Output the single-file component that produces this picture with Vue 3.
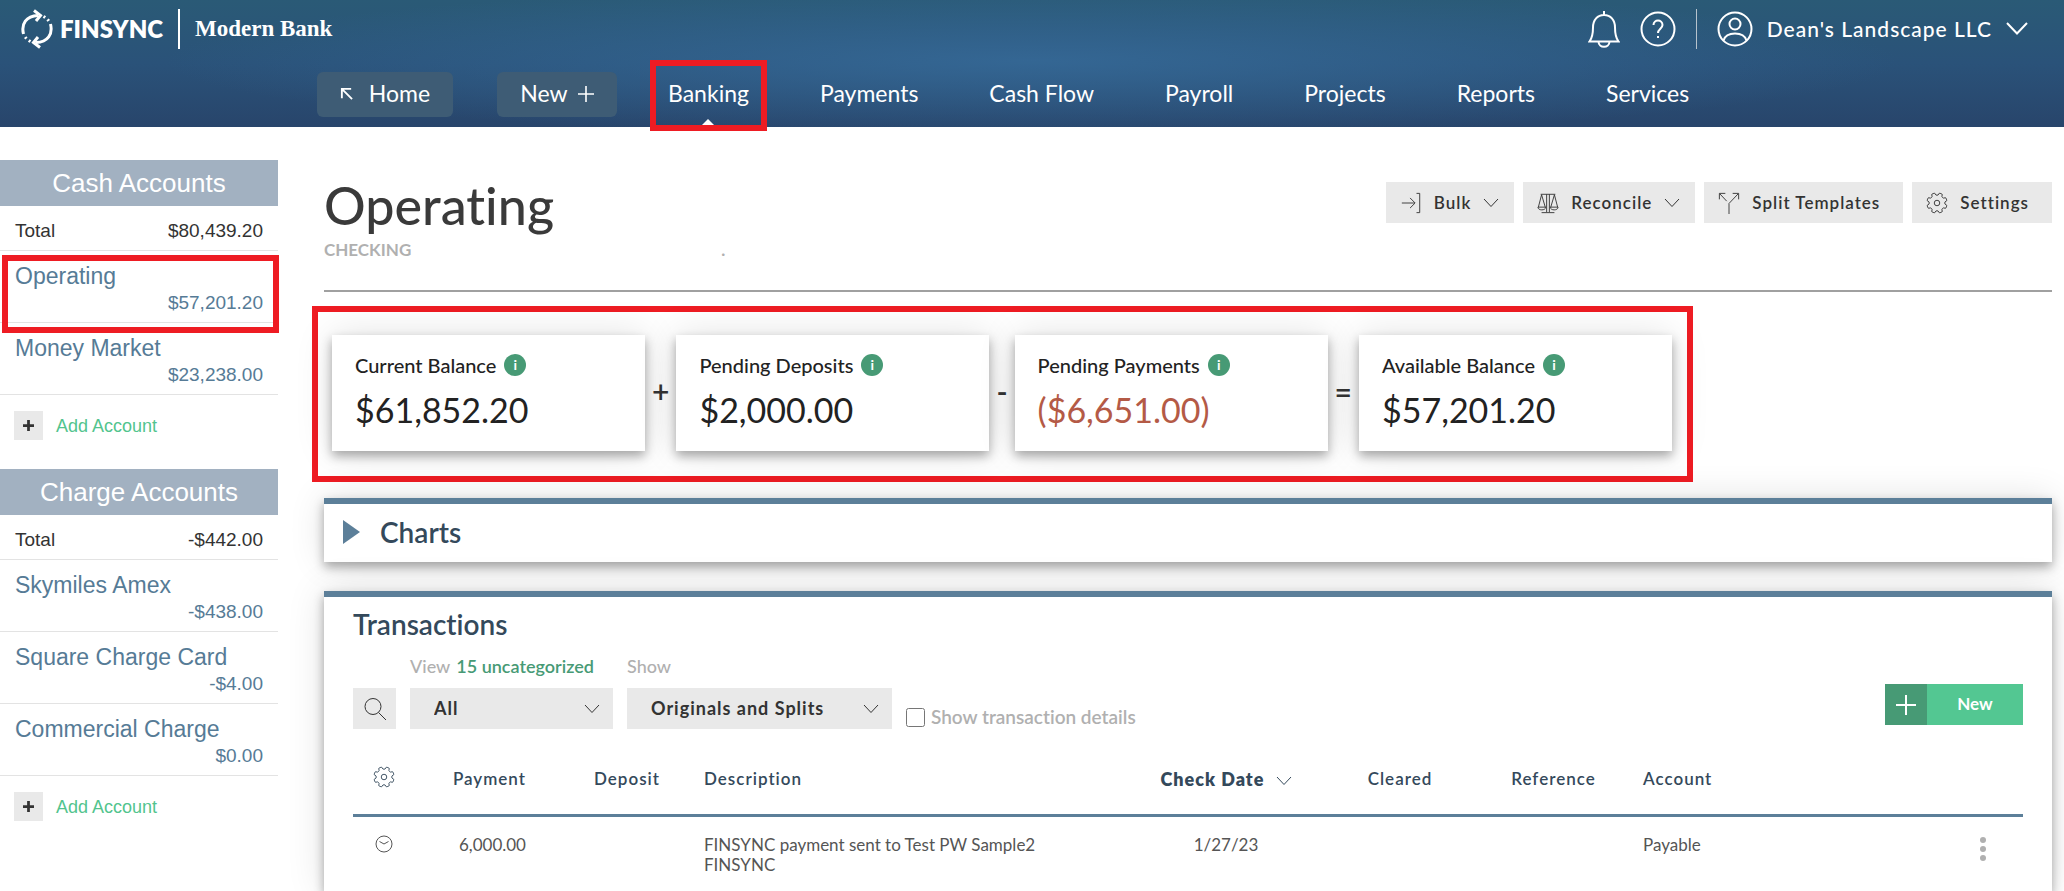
<script setup>
import { ref } from 'vue'

const navLinks = ['Payments', 'Cash Flow', 'Payroll', 'Projects', 'Reports', 'Services']

const groups = [
  {
    title: 'Cash Accounts',
    total: '$80,439.20',
    accounts: [
      { name: 'Operating', amount: '$57,201.20', marked: true },
      { name: 'Money Market', amount: '$23,238.00' },
    ],
  },
  {
    title: 'Charge Accounts',
    total: '-$442.00',
    accounts: [
      { name: 'Skymiles Amex', amount: '-$438.00' },
      { name: 'Square Charge Card', amount: '-$4.00' },
      { name: 'Commercial Charge', amount: '$0.00' },
    ],
  },
]

const actions = [
  { label: 'Bulk', icon: 'bulk', menu: true },
  { label: 'Reconcile', icon: 'scales', menu: true },
  { label: 'Split Templates', icon: 'split' },
  { label: 'Settings', icon: 'gear' },
]

// `op` is the sign drawn in front of the card
const balances = [
  { label: 'Current Balance', value: '$61,852.20' },
  { label: 'Pending Deposits', value: '$2,000.00', op: '+' },
  { label: 'Pending Payments', value: '($6,651.00)', op: '-', negative: true },
  { label: 'Available Balance', value: '$57,201.20', op: '=' },
]

const transactions = [
  {
    payment: '6,000.00',
    deposit: '',
    description: ['FINSYNC payment sent to Test PW Sample2', 'FINSYNC'],
    date: '1/27/23',
    account: 'Payable',
  },
]

const view = ref('All')
const show = ref('Originals and Splits')
const details = ref(false)

// Eight-tooth outline around (12, 12)
function gearPath() {
  const pt = (r, deg) => {
    const a = (deg * Math.PI) / 180
    return `${(12 + r * Math.cos(a)).toFixed(2)} ${(12 + r * Math.sin(a)).toFixed(2)}`
  }
  let d = ''
  for (let i = 0; i < 8; i++) {
    const c = i * 45 + 22.5
    d += `${i ? 'L' : 'M'}${pt(8.8, c - 15)}L${pt(11, c - 9)}Q${pt(11.4, c)} ${pt(11, c + 9)}L${pt(8.8, c + 15)}`
    d += `Q${pt(8.2, c + 22.5)} ${pt(8.8, c + 30)}`
  }
  return d + 'Z'
}
const gear = gearPath()
</script>

<template>
  <div class="page">
    <svg class="sprite" aria-hidden="true">
      <symbol id="chevron" viewBox="0 0 16 10"><path d="M1 1l7 7.500L15 1" /></symbol>
      <symbol id="plus" viewBox="0 0 20 20"><path d="M10 0v20M0 10h20" /></symbol>
      <symbol id="gear" viewBox="0 0 24 24">
        <path :d="gear" />
        <circle cx="12" cy="12" r="3" />
      </symbol>
      <symbol id="bulk" viewBox="0 0 24 24">
        <path d="M2 12h14M11 6.500L16.500 12l-5.500 5.500M18 1.500h3.500v21H18" />
      </symbol>
      <symbol id="scales" viewBox="0 0 24 24">
        <path d="M4 2.500h16M10.500 2.500V22M13.500 2.500V22M5 22.500h14" />
        <path d="M5 3L1.500 16.500M5 3l4 13.500M19 3l-4 13.500M19 3l3.500 13.500" />
        <path d="M1 16.500h8.500c0 4-8.500 4-8.500 0zM14.500 16.500H23c0 4-8.500 4-8.500 0z" />
      </symbol>
      <symbol id="split" viewBox="0 0 24 24">
        <path d="M1.500 8V1.500H8M2 2l7.500 8M22.500 8V1.500H16M22 2L12 12.500V24" />
      </symbol>
    </svg>

    <header class="header">
      <div class="brand-row">
        <a href="#" class="brand">
          <svg class="mark" viewBox="0 0 32 40">
            <path d="M2.500 25C0 15 5 7 17 6.500" />
            <path d="M13 1.500l6.500 5L15 12" />
            <path d="M29.500 15c2.500 10-2.500 18-14.500 18.500" />
            <path d="M19 38.500l-6.500-5L17 28" />
            <path class="dots" d="M22.500 7.500c2.500 1.500 4.500 3 6 5.500M9.500 32.500c-2.500-1.500-4.500-3-6-5.500" />
          </svg>
          <span class="brand-name">FINSYNC</span>
          <span class="brand-sub">Modern Bank</span>
        </a>
        <div class="user-area">
          <button type="button" class="bare" aria-label="Notifications">
            <svg class="bell" viewBox="0 0 32 38">
              <path d="M16 1v4M1.500 31.500h29c-3-4-3.500-8-3.500-14C27 10 22.500 5 16 5S5 10 5 17.500c0 6-.5 10-3.500 14z" />
              <path d="M10.500 31.500c0 7 11 7 11 0" />
            </svg>
          </button>
          <button type="button" class="bare" aria-label="Help">
            <svg class="round" viewBox="0 0 36 36">
              <circle cx="18" cy="18" r="16.500" />
              <path d="M13.500 14c0-6 9-6 9 0 0 3.500-4.500 4-4.500 8M18 25v2" />
            </svg>
          </button>
          <button type="button" class="bare company">
            <svg class="round" viewBox="0 0 36 36">
              <circle cx="18" cy="18" r="16.500" />
              <circle cx="18" cy="13" r="5.500" />
              <path d="M6.500 29.500C8 24.500 12.500 22.500 18 22.500s10 2 11.500 7" />
            </svg>
            <span>Dean's Landscape LLC</span>
            <svg class="company-chevron" viewBox="0 0 22 13"><path d="M1 1l10 10.500L21 1" /></svg>
          </button>
        </div>
      </div>

      <nav class="nav">
        <a href="#" class="pill home">
          <svg viewBox="0 0 14 14"><path d="M2 12V2h10M2.500 2.500L13 13" /></svg>
          Home
        </a>
        <button type="button" class="pill create">
          New
          <svg><use href="#plus" /></svg>
        </button>
        <a href="#" class="active">Banking<i class="callout"></i></a>
        <a v-for="link in navLinks" :key="link" href="#">{{ link }}</a>
      </nav>
    </header>

    <div class="body">
      <aside class="sidebar">
        <section v-for="group in groups" :key="group.title" class="group">
          <h2>{{ group.title }}</h2>
          <div class="total">
            <span>Total</span>
            <span>{{ group.total }}</span>
          </div>
          <a v-for="account in group.accounts" :key="account.name" href="#" class="account">
            <span>{{ account.name }}</span>
            <span class="amount">{{ account.amount }}</span>
            <i v-if="account.marked" class="callout"></i>
          </a>
          <button type="button" class="add">
            <span class="add-box"><svg><use href="#plus" /></svg></span>
            Add Account
          </button>
        </section>
      </aside>

      <main class="main">
        <div class="title-row">
          <div>
            <h1>Operating</h1>
            <div class="kind">
              <span>CHECKING</span>
              <span>.</span>
            </div>
          </div>
          <div class="actions">
            <button v-for="action in actions" :key="action.label" type="button" :class="{ menu: action.menu }">
              <svg class="action-icon"><use :href="`#${action.icon}`" /></svg>
              {{ action.label }}
              <svg v-if="action.menu" class="chevron"><use href="#chevron" /></svg>
            </button>
          </div>
        </div>

        <section class="balances">
          <template v-for="item in balances" :key="item.label">
            <span v-if="item.op" class="op">{{ item.op }}</span>
            <div class="card">
              <div class="card-label">
                {{ item.label }}
                <span class="info">i</span>
              </div>
              <div class="card-value" :class="{ negative: item.negative }">{{ item.value }}</div>
            </div>
          </template>
        </section>

        <section class="panel charts">
          <button type="button">
            <svg viewBox="0 0 17 24"><path d="M0 0l17 12L0 24z" /></svg>
            Charts
          </button>
        </section>

        <section class="panel transactions">
          <h2>Transactions</h2>
          <div class="filters">
            <button type="button" class="search" aria-label="Search">
              <svg viewBox="0 0 24 24">
                <circle cx="10" cy="9.500" r="8" />
                <path d="M15.500 15.500L23 23" />
              </svg>
            </button>
            <div class="field view">
              <div class="caption">
                <label for="view">View</label>
                <a href="#">15 uncategorized</a>
              </div>
              <div class="select">
                <select id="view" v-model="view"><option>All</option></select>
                <svg class="chevron"><use href="#chevron" /></svg>
              </div>
            </div>
            <div class="field show">
              <div class="caption"><label for="show">Show</label></div>
              <div class="select">
                <select id="show" v-model="show"><option>Originals and Splits</option></select>
                <svg class="chevron"><use href="#chevron" /></svg>
              </div>
            </div>
            <label class="check">
              <input v-model="details" type="checkbox" />
              Show transaction details
            </label>
            <button type="button" class="new">
              <span class="new-plus"><svg><use href="#plus" /></svg></span>
              <span class="new-text">New</span>
            </button>
          </div>

          <table>
            <thead>
              <tr>
                <th class="c-icon">
                  <button type="button" class="bare" aria-label="Columns">
                    <svg class="gear"><use href="#gear" /></svg>
                  </button>
                </th>
                <th class="c-payment">Payment</th>
                <th class="c-deposit">Deposit</th>
                <th class="c-description">Description</th>
                <th class="c-date">
                  Check Date
                  <svg class="chevron"><use href="#chevron" /></svg>
                </th>
                <th class="c-cleared">Cleared</th>
                <th class="c-reference">Reference</th>
                <th>Account</th>
                <th class="c-more"></th>
              </tr>
            </thead>
            <tbody>
              <tr v-for="(row, i) in transactions" :key="i">
                <td class="c-icon">
                  <svg class="clock" viewBox="0 0 18 18">
                    <circle cx="9" cy="9" r="8" />
                    <path d="M4.500 6.500L9 9l4.500-2.500" />
                  </svg>
                </td>
                <td class="c-payment">{{ row.payment }}</td>
                <td class="c-deposit">{{ row.deposit }}</td>
                <td class="c-description">
                  <div v-for="line in row.description" :key="line">{{ line }}</div>
                </td>
                <td class="c-date">{{ row.date }}</td>
                <td class="c-cleared"></td>
                <td class="c-reference"></td>
                <td>{{ row.account }}</td>
                <td class="c-more">
                  <button type="button" class="bare" aria-label="More">
                    <svg class="more" viewBox="0 0 8 28">
                      <circle cx="4" cy="5" r="3" />
                      <circle cx="4" cy="14" r="3" />
                      <circle cx="4" cy="23" r="3" />
                    </svg>
                  </button>
                </td>
              </tr>
            </tbody>
          </table>
        </section>
      </main>
    </div>
  </div>
</template>

<style>
body {
  background: #fff;
}
</style>

<style scoped>
.page {
  display: flex;
  flex-direction: column;
  min-height: 100vh;
  font-family: Lato, "Open Sans", sans-serif;
  font-variant-ligatures: none;
  color: #333;
}
.page *,
.page {
  box-sizing: border-box;
}
.sprite {
  position: absolute;
  width: 0;
  height: 0;
}
svg {
  fill: none;
  stroke: currentColor;
  flex: none;
}
button {
  font: inherit;
  font-variant-ligatures: none;
  color: inherit;
  border: 0;
  padding: 0;
  background: none;
  cursor: pointer;
}
a {
  color: inherit;
  text-decoration: none;
}
h1,
h2 {
  margin: 0;
}
.bare {
  display: inline-flex;
  align-items: center;
}
.chevron {
  width: 16px;
  height: 10px;
}

/* red frames around the parts being pointed out */
.callout {
  position: absolute;
  border: 6px solid #ee1c23;
  z-index: 2;
  pointer-events: none;
}

/* header */
.header {
  height: 127px;
  color: #fff;
  background:
    radial-gradient(ellipse 42% 60% at 50% 48%, rgba(54, 106, 152, 0.85), rgba(54, 106, 152, 0)),
    linear-gradient(#2a5a76, #2a5279 50%, #28456b);
}
.brand-row {
  display: flex;
  justify-content: space-between;
  align-items: center;
  height: 58px;
  padding: 0 36px 0 21px;
}
.brand {
  display: flex;
  align-items: center;
}
.mark {
  width: 32px;
  height: 40px;
  stroke-width: 3;
}
.dots {
  stroke-dasharray: 2 3;
}
.brand-name {
  margin-left: 7px;
  padding-right: 15px;
  border-right: 2px solid #fff;
  font-size: 24px;
  line-height: 40px;
  font-weight: 800;
}
.brand-sub {
  margin-left: 15px;
  font: bold 23px/40px "Liberation Serif", serif;
}
.user-area {
  display: flex;
  align-items: center;
  gap: 20px;
}
.bell {
  width: 32px;
  height: 38px;
  stroke-width: 2;
}
.round {
  width: 36px;
  height: 36px;
  stroke-width: 2;
}
.company {
  height: 40px;
  padding: 0 0 1px 20px;
  border-left: 1px solid #b7c3cd;
  font-size: 21px;
  font-weight: 500;
  letter-spacing: 1px;
  gap: 14px;
}
.company-chevron {
  width: 22px;
  height: 13px;
  stroke-width: 2;
}
.nav {
  display: flex;
  gap: 71px;
  padding: 14px 0 0 317px;
  font-size: 23px;
  line-height: 43px;
}
.nav > a,
.nav > button {
  display: flex;
  align-items: center;
  justify-content: center;
  height: 45px;
  padding-bottom: 2px;
  white-space: nowrap;
}
.nav .pill {
  background: #3e5c75;
  border-radius: 6px;
}
.home {
  width: 136px;
  gap: 16px;
}
.home svg {
  width: 13px;
  height: 13px;
  stroke-width: 2;
}
.create {
  width: 120px;
  gap: 10px;
  margin: 0 -20px 0 -27px;
}
.create svg {
  width: 16px;
  height: 16px;
  stroke-width: 2;
}
.active {
  position: relative;
}
.active::after {
  content: "";
  position: absolute;
  bottom: -9px;
  left: 50%;
  margin-left: -7px;
  border: 7px solid transparent;
  border-top: 0;
  border-bottom-color: #fff;
}
.active .callout {
  inset: -12px -18px -14px;
}

/* sidebar */
.body {
  display: flex;
  flex: 1;
}
.sidebar {
  flex: none;
  width: 278px;
  padding-top: 33px;
  font: 19px/26px "Liberation Sans", sans-serif;
}
.group {
  margin-bottom: 29px;
}
.group h2 {
  background: #a2b1c1;
  color: #fff;
  text-align: center;
  font-size: 26px;
  line-height: 46px;
  font-weight: 400;
}
.total {
  display: flex;
  justify-content: space-between;
  padding: 12px 15px 6px;
  border-bottom: 1px solid #e3e3e3;
}
.account {
  position: relative;
  display: flex;
  flex-direction: column;
  padding: 12px 15px 6px;
  border-bottom: 1px solid #e3e3e3;
  color: #567b96;
  font-size: 23px;
}
.amount {
  padding-top: 1px;
  font-size: 19px;
  text-align: right;
}
.account .callout {
  inset: 4px -1px -11px 2px;
}
.add {
  display: flex;
  align-items: center;
  gap: 13px;
  margin: 16px 0 0 14px;
  color: #52c48e;
  font-size: 18px;
}
.add-box {
  display: flex;
  align-items: center;
  justify-content: center;
  width: 29px;
  height: 29px;
  background: #e9e9e9;
  color: #333;
}
.add-box svg {
  width: 11px;
  height: 11px;
  stroke-width: 5;
}

/* main column */
.main {
  display: flex;
  flex-direction: column;
  flex: 1;
  min-width: 0;
  padding: 45px 12px 0 46px;
}
.title-row {
  display: flex;
  justify-content: space-between;
  padding-bottom: 28px;
  border-bottom: 2px solid #a0a0a0;
}
h1 {
  font-size: 52px;
  line-height: 66px;
  font-weight: 500;
  color: #3a3a3a;
}
.kind {
  display: flex;
  gap: 310px;
  color: #b0b0b0;
  font-size: 17px;
  line-height: 24px;
  font-weight: 700;
}
.actions {
  display: flex;
  gap: 9px;
  padding-top: 10px;
}
.actions button {
  display: flex;
  align-items: center;
  gap: 12px;
  height: 41px;
  padding: 0 23px 0 14px;
  background: #e9e9e9;
  font-size: 17px;
  font-weight: 600;
  letter-spacing: 1px;
}
.actions .menu {
  padding-right: 15px;
}
.action-icon {
  width: 22px;
  height: 22px;
}
.balances {
  display: flex;
  width: fit-content;
  margin: 14px 0 16px -12px;
  padding: 23px 15px 25px 14px;
  border: 6px solid #ee1c23;
}
.op {
  display: flex;
  align-items: center;
  padding: 0 7px 4px;
  font-size: 30px;
  font-weight: 600;
}
.card,
.panel {
  background: #fff;
  box-shadow: 0 5px 10px rgba(0, 0, 0, 0.32), 0 0 36px rgba(0, 0, 0, 0.12);
}
.card {
  width: 313px;
  padding: 16px 23px 18px;
  color: #222;
}
.card-label {
  display: flex;
  align-items: center;
  gap: 8px;
  font-size: 20px;
  line-height: 28px;
  font-weight: 500;
}
.info {
  width: 22px;
  height: 22px;
  border-radius: 50%;
  background: #479a75;
  color: #fff;
  text-align: center;
  font-size: 14px;
  line-height: 22px;
  font-weight: 700;
}
.card-value {
  margin-top: 8px;
  font-size: 34px;
  line-height: 46px;
}
.negative {
  color: #b45a46;
}
.panel {
  border-top: 6px solid #5c7f99;
}
.charts {
  margin-bottom: 29px;
}
.charts button {
  display: flex;
  align-items: center;
  gap: 20px;
  width: 100%;
  height: 58px;
  padding: 0 0 3px 19px;
  font-size: 28px;
  font-weight: 600;
  color: #34495b;
}
.charts svg {
  width: 17px;
  height: 24px;
  fill: #5c7f99;
  stroke: none;
}
.transactions {
  flex: 1;
  padding: 8px 29px 0;
}
.transactions h2 {
  font-size: 28px;
  line-height: 38px;
  font-weight: 600;
  color: #34495b;
}
.filters {
  display: flex;
  align-items: flex-end;
  gap: 14px;
  padding-top: 11px;
}
.search {
  display: flex;
  align-items: center;
  justify-content: center;
  width: 43px;
  height: 41px;
  background: #e9e9e9;
}
.search svg {
  width: 24px;
  height: 24px;
}
.view {
  width: 203px;
}
.show {
  width: 265px;
}
.caption {
  display: flex;
  gap: 6px;
  margin-bottom: 10px;
  font-size: 18px;
  line-height: 24px;
  font-weight: 500;
  color: #b0b0b0;
}
.caption a {
  color: #479a75;
  font-weight: 600;
}
.select {
  display: grid;
  align-items: center;
}
.select > * {
  grid-area: 1 / 1;
}
.select .chevron {
  justify-self: end;
  margin-right: 13px;
  pointer-events: none;
}
select {
  appearance: none;
  width: 100%;
  height: 41px;
  padding: 0 36px 2px 24px;
  border: 0;
  border-radius: 0;
  background: #e9e9e9;
  color: #333;
  font: 700 18px Lato, "Open Sans", sans-serif;
  letter-spacing: 1px;
}
.check {
  display: flex;
  align-items: center;
  gap: 6px;
  font-size: 19px;
  line-height: 24px;
  font-weight: 600;
  color: #b0b0b0;
}
.check input {
  width: 19px;
  height: 19px;
  margin: 0;
}
.new {
  display: flex;
  align-self: flex-end;
  margin: 0 0 4px auto;
  height: 41px;
  background: #53c792;
  color: #fff;
  font-size: 17px;
  line-height: 40px;
  font-weight: 700;
}
.new-plus {
  display: flex;
  align-items: center;
  justify-content: center;
  width: 42px;
  height: 41px;
  background: #479a75;
}
.new-plus svg {
  width: 20px;
  height: 20px;
  stroke-width: 2;
}
.new-text {
  width: 96px;
}

/* table */
table {
  width: 100%;
  margin-top: 26px;
  border-collapse: collapse;
  table-layout: fixed;
  text-align: left;
  font-size: 17px;
  line-height: 20px;
}
th {
  height: 60px;
  padding: 0 0 11px;
  border-bottom: 3px solid #5c7f99;
  font-weight: 600;
  letter-spacing: 1px;
  color: #34495b;
}
td {
  padding: 18px 0 0;
  vertical-align: top;
  color: #555;
}
.c-icon {
  width: 62px;
  text-align: center;
}
.c-payment {
  width: 111px;
  text-align: right;
}
.c-deposit {
  width: 134px;
  text-align: right;
}
.c-description {
  width: 456px;
  padding-left: 44px;
}
.c-date {
  width: 220px;
  text-align: center;
}
th.c-date {
  font-size: 18px;
  font-weight: 800;
}
.c-date .chevron {
  margin-left: 6px;
}
.c-cleared {
  width: 128px;
  text-align: center;
}
.c-reference {
  width: 179px;
  text-align: center;
}
.c-more {
  width: 80px;
  text-align: center;
}
.gear {
  width: 22px;
  height: 22px;
}
.clock {
  width: 18px;
  height: 18px;
}
.more {
  width: 8px;
  height: 28px;
  fill: #b0b0b0;
  stroke: none;
}
</style>
